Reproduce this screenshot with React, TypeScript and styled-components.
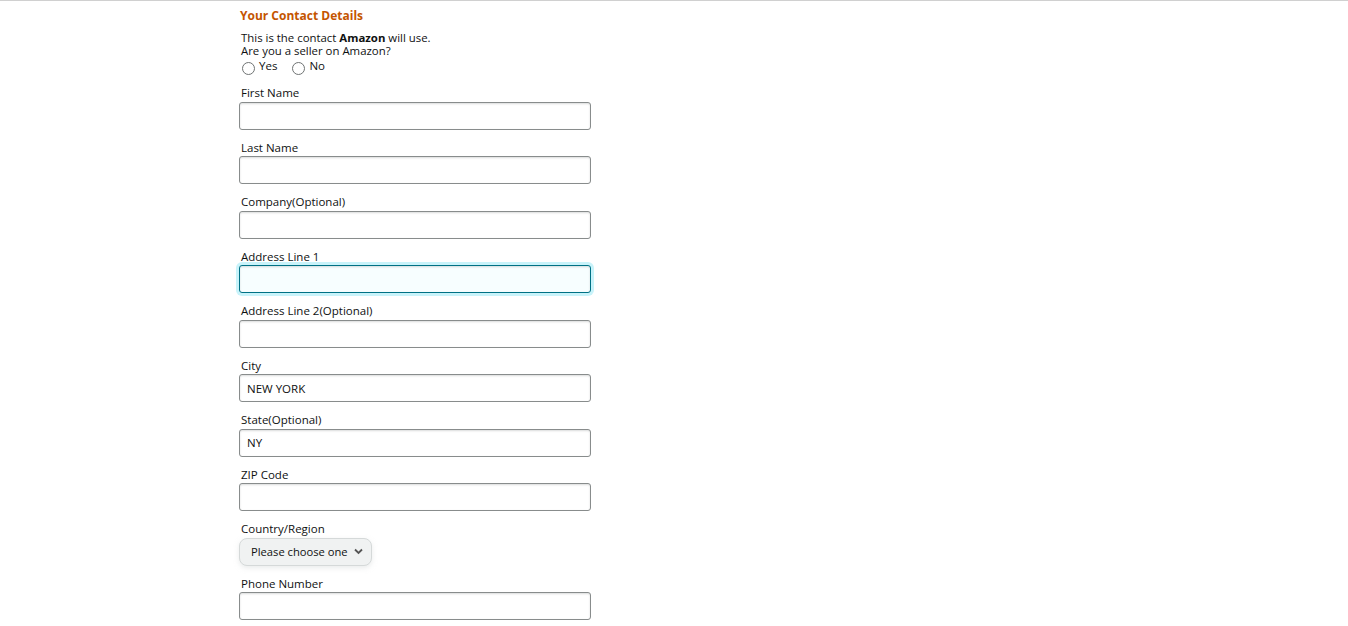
import React from "react";
import styled, { createGlobalStyle } from "styled-components";

const Global = createGlobalStyle`
  html, body { margin: 0; padding: 0; background: #fff; }
  body { font-family: "Open Sans", "Noto Sans", Arial, sans-serif; color: #0f1111; }
  * { box-sizing: border-box; }
`;

const Page = styled.div`
  border-top: 1px solid #d0d0d0;
  padding: 7px 0 0 239px;
  min-height: 626px;
`;

const Form = styled.form`
  width: 352px;
  display: flex;
  flex-direction: column;
`;

const Heading = styled.h2`
  margin: 0 0 7px 1px;
  font-size: 12px;
  line-height: 16px;
  font-weight: 700;
  color: #c45500;
`;

const Para = styled.p`
  margin: 0 0 0 2px;
  font-size: 11.4px;
  line-height: 13px;
  color: #0f1111;
`;

const RadioRow = styled.div`
  display: flex;
  align-items: center;
  gap: 15px;
  margin: 2px 0 11px 3px;
  height: 14px;
`;

const RadioLabel = styled.label`
  display: flex;
  align-items: center;
  gap: 4px;
  font-size: 11.5px;
  line-height: 13px;
  color: #0f1111;
`;

const RadioCircle = styled.span`
  width: 13px;
  height: 13px;
  border: 1px solid #6f7373;
  border-radius: 50%;
  background: #fff;
  margin-top: 4px;
`;

const RadioText = styled.span`
  margin-top: -2px;
`;

const Field = styled.div`
  display: flex;
  flex-direction: column;
  margin-bottom: 9px;
`;

const Label = styled.label`
  font-size: 11.5px;
  line-height: 17.5px;
  padding-left: 2px;
  color: #0f1111;
`;

const Input = styled.div<{ $focused?: boolean }>`
  height: 28px;
  width: 352px;
  border: 1px solid ${(p) => (p.$focused ? "#007185" : "#888c8c")};
  border-radius: 3px;
  background: ${(p) => (p.$focused ? "#f7feff" : "#fff")};
  box-shadow: ${(p) =>
    p.$focused
      ? "0 0 0 3px #c8f3fa, inset 0 1px 2px rgba(15,17,17,.15)"
      : "inset 0 1px 2px rgba(15,17,17,.15)"};
  display: flex;
  align-items: center;
  padding-left: 7px;
  font-size: 11.5px;
  color: #0f1111;
`;

const Select = styled.div`
  align-self: flex-start;
  height: 28px;
  width: 133px;
  border: 1px solid #d5d9d9;
  border-radius: 8px;
  background: #f0f2f2;
  box-shadow: 0 2px 5px rgba(213, 217, 217, 0.5);
  display: flex;
  align-items: center;
  justify-content: space-between;
  padding: 0 8px 0 11px;
  font-size: 11.2px;
  color: #0f1111;
`;

const Chevron = () => (
  <svg width="9" height="7" viewBox="0 0 9 7">
    <path d="M1 1.5 L4.5 5 L8 1.5" fill="none" stroke="#555" strokeWidth="1.8" />
  </svg>
);

const fields: { label: string; value?: string; focused?: boolean }[] = [
  { label: "First Name" },
  { label: "Last Name" },
  { label: "Company(Optional)" },
  { label: "Address Line 1", focused: true },
  { label: "Address Line 2(Optional)" },
  { label: "City", value: "NEW YORK" },
  { label: "State(Optional)", value: "NY" },
  { label: "ZIP Code" },
];

export default function App() {
  return (
    <>
      <Global />
      <Page>
        <Form>
          <Heading>Your Contact Details</Heading>
          <Para>
            This is the contact <b>Amazon</b> will use.
          </Para>
          <Para>Are you a seller on Amazon?</Para>
          <RadioRow>
            <RadioLabel>
              <RadioCircle />
              <RadioText>Yes</RadioText>
            </RadioLabel>
            <RadioLabel>
              <RadioCircle />
              <RadioText>No</RadioText>
            </RadioLabel>
          </RadioRow>
          {fields.map((f) => (
            <Field key={f.label}>
              <Label>{f.label}</Label>
              <Input $focused={f.focused}>{f.value}</Input>
            </Field>
          ))}
          <Field>
            <Label>Country/Region</Label>
            <Select>
              <span>Please choose one</span>
              <Chevron />
            </Select>
          </Field>
          <Field>
            <Label>Phone Number</Label>
            <Input />
          </Field>
        </Form>
      </Page>
    </>
  );
}
